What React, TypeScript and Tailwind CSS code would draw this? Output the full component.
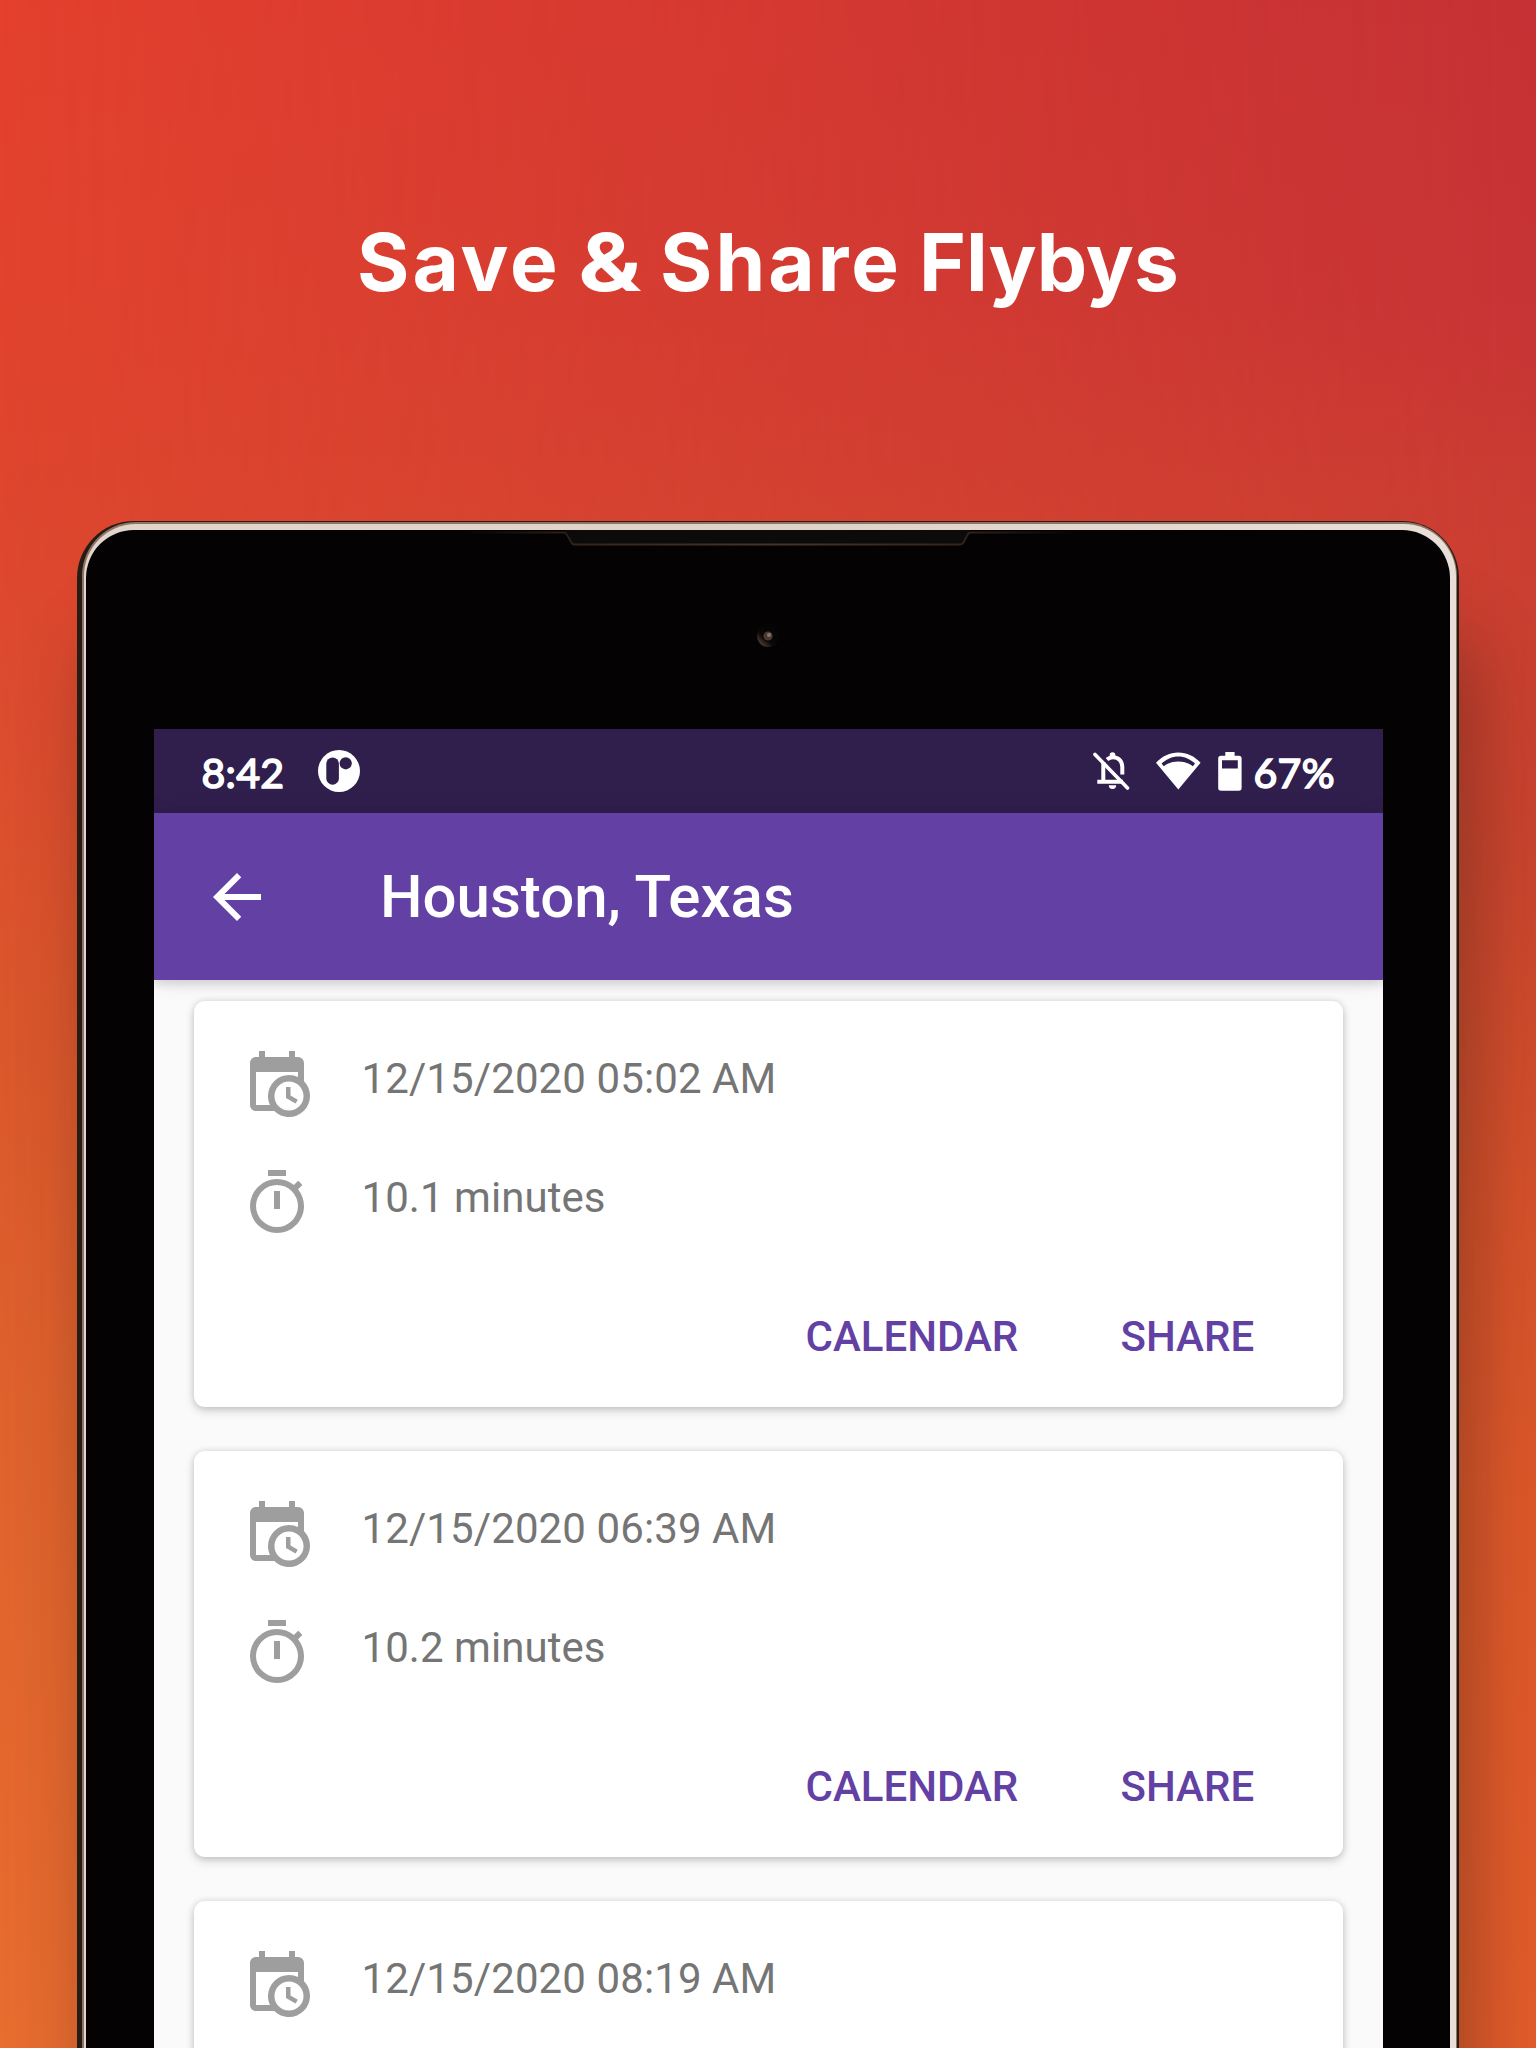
const flybys = [
  { time: '12/15/2020 05:02 AM', duration: '10.1 minutes' },
  { time: '12/15/2020 06:39 AM', duration: '10.2 minutes' },
  { time: '12/15/2020 08:19 AM', duration: '' },
];

function CalendarClockIcon() {
  return (
    <svg className="size-[72px] shrink-0" viewBox="0 0 24 24" fill="#9e9e9e">
      <path d="M15,13H16.5V15.82L18.94,17.23L18.19,18.53L15,16.69V13M19,8H5V19H9.67C9.24,18.09 9,17.07 9,16A7,7 0 0,1 16,9C17.07,9 18.09,9.24 19,9.67V8M5,21C3.89,21 3,20.1 3,19V5C3,3.89 3.89,3 5,3H6V1H8V3H16V1H18V3H19A2,2 0 0,1 21,5V11.1C22.24,12.36 23,14.09 23,16A7,7 0 0,1 16,23C14.09,23 12.36,22.24 11.1,21H5M16,11.15A4.85,4.85 0 0,0 11.15,16C11.15,18.68 13.32,20.85 16,20.85A4.85,4.85 0 0,0 20.85,16C20.85,13.32 18.68,11.15 16,11.15Z" />
    </svg>
  );
}

function TimerIcon() {
  return (
    <svg className="size-[72px] shrink-0" viewBox="0 0 24 24" fill="#9e9e9e">
      <path d="M12,20A7,7 0 0,1 5,13A7,7 0 0,1 12,6A7,7 0 0,1 19,13A7,7 0 0,1 12,20M19.03,7.39L20.45,5.97C20,5.46 19.55,5 19.04,4.56L17.62,6C16.07,4.74 14.12,4 12,4A9,9 0 0,0 3,13A9,9 0 0,0 12,22C17,22 21,17.97 21,13C21,10.88 20.26,8.93 19.03,7.39M11,14H13V8H11M15,1H9V3H15V1Z" />
    </svg>
  );
}

function StatusBar() {
  return (
    <div className="flex h-[84px] shrink-0 items-center bg-[#301e4d] px-[48px] font-[Lato] text-[41px] leading-[42px] text-white">
      <span className="w-[84px] pt-[3px] tracking-[0.3px] whitespace-nowrap [-webkit-text-stroke:1.6px_white]">8:42</span>
      <svg className="ml-[32px] h-[42px] w-[42px]" viewBox="0 0 42 42">
        <circle cx="21" cy="21" r="21" fill="#fff" />
        <rect x="8.3" y="7.5" width="12.6" height="27.2" rx="6.3" fill="#301e4d" />
        <circle cx="27.7" cy="13.3" r="6.1" fill="#301e4d" />
      </svg>
      <div className="ml-auto flex items-center">
        <svg className="h-[38px] w-[37px]" viewBox="0 0 37 38" fill="none" stroke="#fff">
          <path d="M2 2.4L34.5 36" strokeWidth="3.6" strokeLinecap="round" />
          <path d="M10.3 12V29.8M6.3 29.8H28" strokeWidth="4" strokeLinecap="square" />
          <path d="M14 7.5C16 5.8 18 5.3 20 5.3C26 5.3 29.3 9.8 29.3 15V22.5" strokeWidth="4" />
          <circle cx="19.5" cy="3" r="2.8" fill="#fff" stroke="none" />
          <path d="M15.8 33.2H23.2A3.7 3.7 0 0 1 15.8 33.2Z" fill="#fff" stroke="none" />
        </svg>
        <svg className="ml-[26px] h-[38px] w-[45px]" viewBox="0 0 45 38">
          <path
            fill="#fff"
            fillRule="evenodd"
            d="M22.3 37.6L0 10.8C6 4 14 .4 22.3 .4S38.6 4 44.6 10.8ZM5.6 11.6L7.7 14.2C12 11 17 9.5 22.3 9.5S32.6 11 36.9 14.2L39 11.6C34.5 7 28.5 4.4 22.3 4.4S10.1 7 5.6 11.6Z"
          />
        </svg>
        <svg className="ml-[17px] h-[39px] w-[24px]" viewBox="0 0 24 39">
          <path
            fill="#fff"
            fillRule="evenodd"
            d="M7.3 0H16.6V3.8H20.8Q23.6 3.8 23.6 6.6V36Q23.6 38.8 20.8 38.8H3Q.2 38.8 .2 36V6.6Q.2 3.8 3 3.8H7.3ZM4 8.3V16.5H19.8V8.3Z"
          />
        </svg>
        <span className="ml-[12px] w-[81px] pt-[3px] tracking-[0.3px] whitespace-nowrap [-webkit-text-stroke:1.6px_white]">67%</span>
      </div>
    </div>
  );
}

function AppBar() {
  return (
    <div className="relative z-10 flex h-[167px] shrink-0 items-center bg-[#6340a4] pl-[47.5px] text-white shadow-[0_4px_10px_rgba(0,0,0,0.14),0_0_24px_rgba(0,0,0,0.08)]">
      <svg className="size-[72px]" viewBox="0 0 24 24" fill="#fff">
        <path d="M20 11H7.83l5.59-5.59L12 4l-8 8 8 8 1.41-1.41L7.83 13H20v-2z" />
      </svg>
      <h2 className="ml-[107px] text-[60px] leading-[60px] font-medium whitespace-nowrap">Houston, Texas</h2>
    </div>
  );
}

function FlybyCard({ time, duration }: { time: string; duration: string }) {
  return (
    <article className="h-[406px] shrink-0 rounded-[11px] bg-white pt-[47px] pl-[47.5px] shadow-[0_4px_10px_rgba(0,0,0,0.17),0_0_7px_rgba(0,0,0,0.12)]">
      <div className="flex h-[72px] text-[42px] leading-[62px] text-[#757575]">
        <CalendarClockIcon />
        <p className="ml-[48.5px] tracking-[0.1px] whitespace-nowrap">{time}</p>
      </div>
      {duration && (
        <>
          <div className="mt-[47.5px] flex h-[72px] text-[42px] leading-[62px] text-[#757575]">
            <TimerIcon />
            <p className="ml-[48.5px] tracking-[0.05px] whitespace-nowrap">{duration}</p>
          </div>
          <div className="mt-[73.5px] flex justify-end gap-[103px] pr-[88px] text-[42px] leading-[48px] font-medium text-[#6340a4]">
            <button className="w-[212px] text-left whitespace-nowrap">CALENDAR</button>
            <button className="w-[134px] text-left whitespace-nowrap">SHARE</button>
          </div>
        </>
      )}
    </article>
  );
}

function Screen() {
  return (
    <div className="ml-[67.5px] flex h-[1319px] w-[1229px] flex-col overflow-hidden bg-[#fafafa]">
      <StatusBar />
      <AppBar />
      <div className="flex flex-col gap-[44.2px] px-[40px] pt-[20.7px]">
        {flybys.map((f) => (
          <FlybyCard key={f.time} time={f.time} duration={f.duration} />
        ))}
      </div>
    </div>
  );
}

function Tablet() {
  return (
    <div className="ml-[77px] h-[1700px] w-[1382px] rounded-t-[57px] bg-[#251c15] pt-[1px] pr-[2px] pl-[5px] shadow-[16px_110px_70px_rgba(60,30,20,0.38)]">
      <div className="h-full rounded-t-[54px] bg-[#8f7463] pt-[2px] pr-[1px] pl-[2px]">
        <div className="h-full rounded-t-[52px] bg-linear-to-r from-[#e2d6cc] via-[#dfd2c8] to-[#e8dfd9] pt-[6px] pr-[6px] pl-[2px]">
          <div className="relative h-full rounded-t-[48px] bg-[#040203] pt-[199px]">
            <svg className="absolute top-0 left-[374px] h-[18px] w-[620px]" viewBox="-100 0 620 18" fill="none">
              <defs>
                <linearGradient id="rim" gradientUnits="userSpaceOnUse" x1="-100" y1="0" x2="520" y2="0">
                  <stop offset="0" stopColor="#33261e" stopOpacity="0" />
                  <stop offset="0.2" stopColor="#33261e" />
                  <stop offset="0.5" stopColor="#45342a" />
                  <stop offset="0.8" stopColor="#33261e" />
                  <stop offset="1" stopColor="#33261e" stopOpacity="0" />
                </linearGradient>
              </defs>
              <path d="M5 2.5L13 15H403L410 2.5V0H5Z" fill="#0d0b09" />
              <path
                d="M-100 2.5H5Q6 3 12 13.5Q13 14.5 15 14.5H400Q402.500 14.500 403.500 12.500L408 4Q409 2.500 411 2.500H520"
                stroke="url(#rim)"
                strokeWidth="1.8"
              />
            </svg>
            <svg className="absolute top-[94px] left-[671px] size-[24px]" viewBox="0 0 24 24">
              <defs>
                <linearGradient id="lens" x1="0.1" y1="0.95" x2="0.65" y2="0.35">
                  <stop offset="0" stopColor="#5c4940" />
                  <stop offset="0.55" stopColor="#0c0807" />
                  <stop offset="1" stopColor="#060404" />
                </linearGradient>
              </defs>
              <circle cx="11" cy="12" r="11" fill="url(#lens)" />
              <circle cx="11" cy="12" r="5.8" fill="#0b0706" />
              <circle cx="11" cy="12" r="4.6" fill="#4b3a34" />
              <circle cx="12" cy="11" r="2" fill="#8d7569" />
            </svg>
            <Screen />
          </div>
        </div>
      </div>
    </div>
  );
}

export default function App() {
  return (
    <main className="relative h-[2048px] w-[1536px] overflow-hidden bg-[linear-gradient(180deg,#e4402e_0px,#df452e_450px,#dc4b2f_700px,#da562c_1000px,#de622d_1400px,#e76d30_2048px)] font-[Roboto]">
      <div className="absolute inset-0 bg-[linear-gradient(180deg,#c53134_0px,#c73435_300px,#ca3d32_520px,#c8442e_850px,#d4512b_1200px,#dd582a_1500px,#e35c2b_2048px)] mask-[linear-gradient(90deg,transparent,rgba(0,0,0,0.5)_50%,black)]" />
      <div className="relative">
        <h1 className="flex h-[521px] pt-[212px] pl-[357px] font-[Inter] text-[80px] leading-[100px] font-bold whitespace-nowrap text-white">
          <span className="w-[221px] tracking-[3px]">Save</span>
          <span className="w-[82px] origin-left scale-x-[1.18]">&amp;</span>
          <span className="w-[259px] tracking-[3px]">Share</span>
          <span>Flybys</span>
        </h1>
        <Tablet />
      </div>
    </main>
  );
}
